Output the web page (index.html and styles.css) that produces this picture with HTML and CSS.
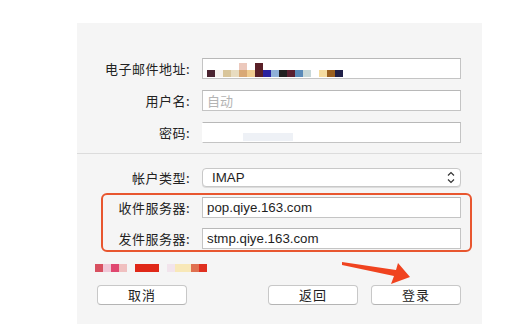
FILE: index.html
```html
<!DOCTYPE html>
<html lang="zh-CN">
<head>
<meta charset="utf-8">
<title>添加帐户</title>
<link rel="stylesheet" href="styles.css">
</head>
<body>
<div class="panel">
  <div class="form-top">
    <label class="lbl">电子邮件地址:</label>
    <div class="field censored">
      <span class="px" style="background:#4a2330"></span>
      <span class="px gap" style="background:#f6f2ee"></span>
      <span class="px" style="background:#d9c59a"></span>
      <span class="px" style="background:#e8dcc0"></span>
      <span class="px tall" style="background:#d9a875;box-shadow:0 -7px 0 #ecc9bd"></span>
      <span class="px" style="background:#f0cc90"></span>
      <span class="px tall2" style="background:#5a2028"></span>
      <span class="px" style="background:#2a22a0"></span>
      <span class="px" style="background:#8fb0d8"></span>
      <span class="px" style="background:#202020"></span>
      <span class="px" style="background:#5a2030"></span>
      <span class="px" style="background:#5a8ab8"></span>
      <span class="px" style="background:#c8d8d8"></span>
      <span class="px" style="background:#ffffff"></span>
      <span class="px" style="background:#f5dca0"></span>
      <span class="px" style="background:#9a6020"></span>
      <span class="px" style="background:#202048"></span>
    </div>
    <label class="lbl">用户名:</label>
    <div class="field"><span class="ph">自动</span></div>
    <label class="lbl">密码:</label>
    <div class="field pw"><span class="blur"></span></div>
  </div>
  <div class="sep"></div>
  <div class="type-row">
    <label class="lbl">帐户类型:</label>
    <div class="select">
      <span class="val">IMAP</span>
      <svg class="chev" width="8" height="13" viewBox="0 0 8 13"><path d="M1 4.5 L4 1.5 L7 4.5 M1 8.5 L4 11.5 L7 8.5" fill="none" stroke="#333" stroke-width="1.2"/></svg>
    </div>
  </div>
  <div class="redbox">
    <label class="lbl">收件服务器:</label>
    <div class="field"><span class="val">pop.qiye.163.com</span></div>
    <label class="lbl">发件服务器:</label>
    <div class="field"><span class="val">stmp.qiye.163.com</span></div>
  </div>
  <div class="censor-row">
    <span class="cb" style="background:#d85060"></span>
    <span class="cb" style="background:#f0c8d8"></span>
    <span class="cb" style="background:#e04870"></span>
    <span class="cb" style="background:#f0c0c0"></span>
    <span class="cb spacer"></span>
    <span class="cb wide" style="background:#e02818"></span>
    <span class="cb spacer"></span>
    <span class="cb" style="background:#f2e4ec"></span>
    <span class="cb wide2" style="background:#f8e8b8"></span>
    <span class="cb" style="background:#e07050"></span>
    <span class="cb" style="background:#e03020"></span>
  </div>
  <div class="buttons">
    <button class="btn">取消</button>
    <div class="right">
      <button class="btn">返回</button>
      <button class="btn">登录</button>
    </div>
  </div>
  <svg class="arrow" width="80" height="35" viewBox="0 0 80 35"><polygon points="5,7 59,15 61,8 73,22 54,29 57,21 5,10" fill="#f0431f"/></svg>
</div>
</body>
</html>
```
FILE: styles.css
```css
html, body {
  margin: 0;
  padding: 0;
  background: #ffffff;
}
body {
  font-family: "Noto Sans CJK SC", "Liberation Sans", sans-serif;
  font-size: 13px;
  color: #222;
  width: 514px;
  height: 336px;
  overflow: hidden;
}
.panel {
  position: relative;
  margin: 23px 0 0 77px;
  width: 405px;
  height: 301px;
  background: #f5f5f5;
  display: flex;
  flex-direction: column;
}
.form-top {
  padding-top: 35px;
  display: grid;
  grid-template-columns: 113px 259px;
  column-gap: 12px;
  row-gap: 11px;
}
.lbl {
  text-align: right;
  line-height: 21px;
  height: 21px;
  letter-spacing: 0.5px;
  white-space: nowrap;
}
.field {
  box-sizing: border-box;
  height: 21px;
  background: #fff;
  border: 1px solid #c4c4c4;
  border-top-color: #b8b8b8;
  display: flex;
  align-items: center;
  padding-left: 4px;
}
.ph {
  color: #b4b4b4;
  font-size: 13px;
}
.val {
  font-family: "Liberation Sans", Arial, sans-serif;
  font-size: 13.3px;
  color: #1e1e1e;
}
.censored {
  align-items: flex-end;
  padding-bottom: 1px;
}
.px {
  display: block;
  width: 8px;
  height: 7px;
}
.px.tall2 {
  height: 14px;
}
.pw {
  position: relative;
  border-left-color: #fff;
}
.blur {
  position: absolute;
  left: 40px;
  top: 10px;
  width: 50px;
  height: 8px;
  background: #eef1f6;
}
.sep {
  margin-top: 10px;
  height: 1px;
  background: #dcdcdc;
}
.type-row {
  margin-top: 13px;
  display: grid;
  grid-template-columns: 113px 259px;
  column-gap: 12px;
  align-items: center;
}
.select {
  box-sizing: border-box;
  height: 19px;
  background: #fff;
  border: 1px solid #c8c8c8;
  border-radius: 4px;
  box-shadow: 0 1px 0 #dcdcdc;
  display: flex;
  align-items: center;
  justify-content: space-between;
  padding: 0 5px 0 9px;
}
.chev {
  display: block;
}
.redbox {
  margin: 5px 0 0 24px;
  width: 371px;
  box-sizing: border-box;
  border: 2px solid #e8562f;
  border-radius: 6px;
  padding: 2px 9px 1px 0;
  display: grid;
  grid-template-columns: 87px 259px;
  column-gap: 12px;
  row-gap: 10px;
}
.redbox .field {
  height: 21px;
}
.censor-row {
  margin-top: 12px;
  padding-left: 18px;
  display: flex;
  height: 8px;
}
.cb {
  display: block;
  width: 8px;
  height: 8px;
}
.cb.spacer {
  background: transparent;
}
.cb.wide {
  width: 24px;
}
.cb.wide2 {
  width: 16px;
}
.buttons {
  margin-top: 13px;
  padding: 0 21px 0 20px;
  display: flex;
  justify-content: space-between;
}
.right {
  display: flex;
  gap: 13px;
}
.btn {
  box-sizing: border-box;
  width: 90px;
  height: 20px;
  padding: 0;
  background: #fff;
  border: 1px solid #c8c8c8;
  border-bottom-color: #b4b4b4;
  border-radius: 4px;
  font-family: "Noto Sans CJK SC", sans-serif;
  font-size: 13px;
  color: #222;
  line-height: 18px;
  letter-spacing: 1px;
}
.arrow {
  position: absolute;
  left: 260px;
  top: 232px;
}
```
